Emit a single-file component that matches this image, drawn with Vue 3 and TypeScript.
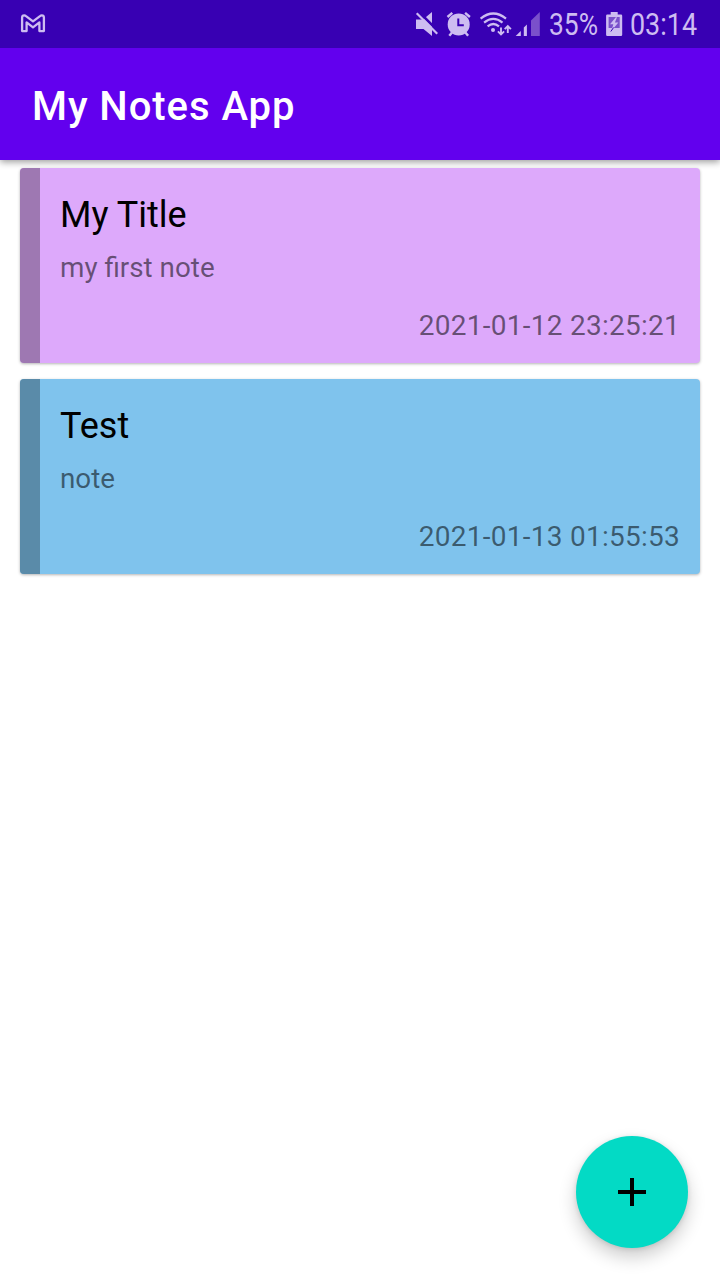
<script setup lang="ts">
interface Note {
  id: number
  title: string
  body: string
  date: string
  tone: 'purple' | 'blue'
}

const notes: Note[] = [
  { id: 1, title: 'My Title', body: 'my first note', date: '2021-01-12 23:25:21', tone: 'purple' },
  { id: 2, title: 'Test', body: 'note', date: '2021-01-13 01:55:53', tone: 'blue' },
]
</script>

<template>
  <div class="screen">
    <header class="status-bar">
      <svg class="mail" width="26" height="48" viewBox="20 0 26 48">
        <path d="M22.1 31.1V17.6Q22.1 15.4 24.2 15.4Q25.2 15.4 26 16.1L33 21.4L40 16.1Q40.8 15.4 41.8 15.4Q43.9 15.4 43.9 17.6V31.1H39.4V22.4L33 27.3L26.6 22.4V31.1Z" fill="none" stroke="#cdbcf1" stroke-width="2.3" stroke-linejoin="round" />
      </svg>
      <svg class="tray" width="306" height="48" viewBox="414 0 306 48">
        <g fill="#cdbcf1">
          <!-- muted speaker -->
          <path d="M416 19.5H423L432 12V36L423.5 29H416Z" />
          <path d="M418.5 11.5L439.5 32.5" stroke="#3800b3" stroke-width="2.5" />
          <path d="M416.7 13.2L437.2 33.7" stroke="#cdbcf1" stroke-width="2.2" />
          <!-- alarm -->
          <circle cx="458.7" cy="24.4" r="11" />
          <path d="M447.5 17L452.3 12.8M469.9 17L465.1 12.8M452 32.5L449.3 35.8M465.4 32.5L468.1 35.8" stroke="#cdbcf1" stroke-width="2.4" />
          <path d="M458.3 18.6V25.2H463.8" fill="none" stroke="#3800b3" stroke-width="2" />
          <!-- wifi -->
          <g fill="none" stroke="#cdbcf1" stroke-width="2.2">
            <path d="M480.6 18.6Q493.3 8.4 506 18.6" />
            <path d="M484.1 22.6Q493.3 15.2 502.5 22.6" />
            <path d="M487.6 26.4Q493.3 21.6 499 26.4" />
            <path d="M501 27.5V34M497.9 31.3L501 34.4L504.1 31.3M507.8 33V26.5M504.7 29.2L507.8 26.1L510.9 29.2" stroke-width="1.9" />
          </g>
          <circle cx="493" cy="30" r="2" />
          <!-- signal -->
          <path d="M515.7 36L520.8 31V36Z" />
          <path d="M523.8 27.6L526.9 24.5V36H523.8Z" />
          <path d="M531 20.5L539.8 12V36H531Z" fill="#7a50cb" />
          <!-- battery -->
          <path d="M610.7 12H617.7V14.6H621Q622.2 14.6 622.2 15.8V34.8Q622.2 36 621 36H607.3Q606.1 36 606.1 34.8V15.8Q606.1 14.6 607.3 14.6H610.7Z" />
          <path d="M608.6 17H619.7V28H608.6Z" fill="#7a50cb" />
          <path d="M615.8 17.2L610 24.3H613.3L611.5 30.8L618.4 22.6H614.9L617 17.2Z" />
          <path d="M613.6 27.5L610.8 31.5" stroke="#3800b3" stroke-width="1" />
        </g>
        <text class="status-text" x="549" y="35.2" textLength="49" lengthAdjust="spacingAndGlyphs">35%</text>
        <text class="status-text" x="630" y="35.2" textLength="67" lengthAdjust="spacingAndGlyphs">03:14</text>
      </svg>
    </header>

    <div class="app-bar">
      <h1 class="app-title">My Notes App</h1>
    </div>

    <main class="notes">
      <article v-for="note in notes" :key="note.id" class="note" :class="note.tone">
        <div class="stripe"></div>
        <div class="content">
          <h2 class="title">{{ note.title }}</h2>
          <p class="body">{{ note.body }}</p>
          <time class="date">{{ note.date }}</time>
        </div>
      </article>
    </main>

    <button class="fab" type="button" aria-label="Add note">
      <svg width="28" height="28" viewBox="0 0 28 28">
        <path d="M12 0H16V12H28V16H16V28H12V16H0V12H12Z" fill="#000" />
      </svg>
    </button>
  </div>
</template>

<style>
body {
  margin: 0;
  background: #fff;
}
</style>

<style scoped>
.screen {
  position: relative;
  display: flex;
  flex-direction: column;
  width: 720px;
  height: 1280px;
  overflow: hidden;
  background: #fff;
  font-family: Roboto, "Liberation Sans", sans-serif;
}
.status-bar {
  position: relative;
  z-index: 1;
  display: flex;
  justify-content: space-between;
  height: 48px;
  padding-left: 20px;
  background: #3800b3;
}
.status-text {
  font-size: 31px;
  fill: #cdbcf1;
}
.app-bar {
  display: flex;
  align-items: center;
  height: 112px;
  padding: 6px 32px 0;
  box-sizing: border-box;
  background: #6200ee;
  box-shadow: 0 2px 7px rgba(0, 0, 0, 0.4);
}
.app-title {
  margin: 0;
  color: #fff;
  font-size: 40px;
  font-weight: 500;
  line-height: 48px;
  letter-spacing: 0.95px;
}
.notes {
  display: flex;
  flex-direction: column;
  gap: 16px;
  padding: 8px 20px;
}
.note {
  display: flex;
  height: 195px;
  overflow: hidden;
  border-radius: 4px;
  box-shadow: 0 1px 3px rgba(0, 0, 0, 0.3);
}
.purple {
  background: #dda9fb;
}
.blue {
  background: #7fc3ed;
}
.stripe {
  width: 20px;
  background: #9e78b2;
}
.blue .stripe {
  background: #5a8ba9;
}
.content {
  display: flex;
  flex: 1;
  flex-direction: column;
  padding: 25px 20px 0;
}
.title {
  margin: 0;
  color: #000;
  font-size: 36px;
  font-weight: 400;
  line-height: 44px;
}
.body {
  margin: 14px 0 0;
  font-size: 27.8px;
  line-height: 34px;
  color: rgba(0, 0, 0, 0.54);
}
.date {
  align-self: flex-end;
  margin-top: 24px;
  font-size: 28px;
  line-height: 34px;
  letter-spacing: 0.26px;
  color: rgba(0, 0, 0, 0.54);
}
.fab {
  position: absolute;
  right: 32px;
  bottom: 32px;
  display: flex;
  align-items: center;
  justify-content: center;
  width: 112px;
  height: 112px;
  padding: 0;
  border: 0;
  border-radius: 50%;
  background: #03dac5;
  box-shadow: 0 9px 18px rgba(0, 0, 0, 0.2), 0 1px 5px rgba(0, 0, 0, 0.12);
}
</style>
